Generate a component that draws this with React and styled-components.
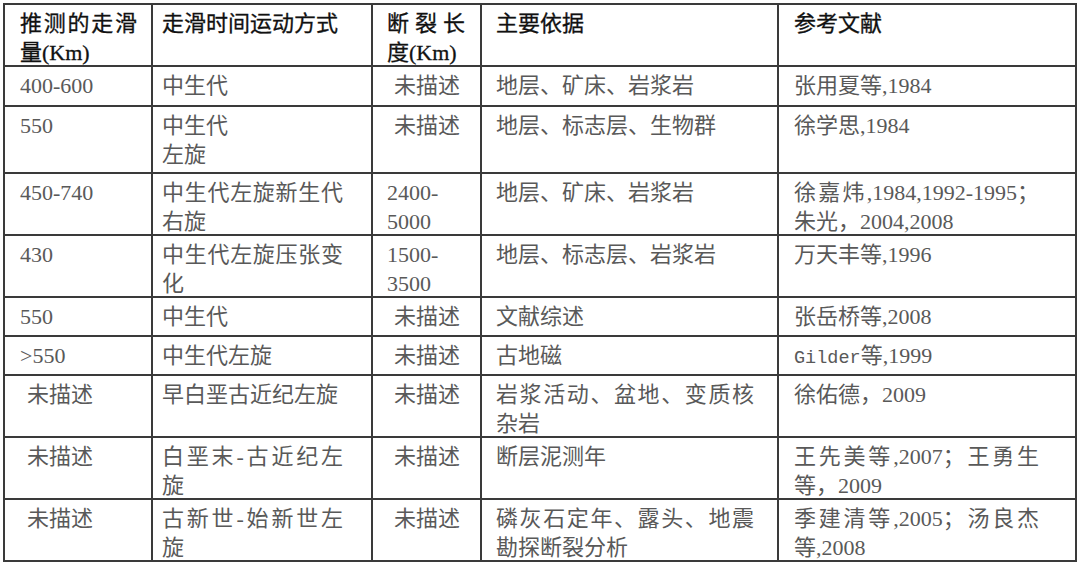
import React from "react";
import styled, { createGlobalStyle } from "styled-components";

const GlobalStyle = createGlobalStyle`
  html, body {
    margin: 0;
    padding: 0;
    background: #ffffff;
  }
  body {
    width: 1080px;
    height: 566px;
    overflow: hidden;
  }
`;

const COLS = [
  { w: 148, pl: 15, pr: 14 },
  { w: 220, pl: 9, pr: 28 },
  { w: 109, pl: 14, pr: 15 },
  { w: 297, pl: 14, pr: 23 },
  { w: 298, pl: 15, pr: 36 },
];

const Page = styled.div`
  padding: 3px 0 0 3px;
`;

const Table = styled.table`
  border-collapse: collapse;
  table-layout: fixed;
  width: 1074px;
  font-family: "Noto Sans CJK SC", sans-serif;
  font-size: 22px;
  line-height: 29px;
  color: #595959;
`;

const Col = styled.col`
  width: ${(p) => p.$w}px;
`;

const Row = styled.tr`
  height: ${(p) => p.$h}px;
`;

const Cell = styled.td`
  border: 2px solid #3a3a3a;
  vertical-align: top;
  padding: 2px ${(p) => COLS[p.$col].pr}px 0 ${(p) => COLS[p.$col].pl}px;
  text-align: justify;
  text-indent: ${(p) => p.$indent || 0}px;
  white-space: pre-line;
`;

const HeadCell = styled(Cell).attrs({ as: "th" })`
  font-weight: normal;
  color: #111111;
  -webkit-text-stroke: 0.3px #111111;
`;

const Txt = styled.span`
  font-family: "Liberation Serif", "Noto Sans CJK SC", serif;
  line-height: 1;
`;

const Mono = styled.span`
  font-family: "Liberation Mono", monospace;
  font-size: 18.5px;
  line-height: 1;
`;

const header = [
  "推测的走滑量(Km)",
  "走滑时间运动方式",
  "断裂长度(Km)",
  "主要依据",
  "参考文献",
];

const I = (t) => ({ t, indent: 7 });

const rows = [
  { h: 40, cells: ["400-600", "中生代", I("未描述"), "地层、矿床、岩浆岩", "张用夏等,1984"] },
  { h: 67, cells: ["550", "中生代\n左旋", I("未描述"), "地层、标志层、生物群", "徐学思,1984"] },
  {
    h: 61,
    cells: [
      "450-740",
      "中生代左旋新生代右旋",
      "2400-\n5000",
      "地层、矿床、岩浆岩",
      "徐嘉炜,1984,1992-1995；朱光，2004,2008",
    ],
  },
  { h: 62, cells: ["430", "中生代左旋压张变化", "1500-\n3500", "地层、标志层、岩浆岩", "万天丰等,1996"] },
  { h: 39, cells: ["550", "中生代", I("未描述"), "文献综述", "张岳桥等,2008"] },
  { h: 39, cells: [">550", "中生代左旋", I("未描述"), "古地磁", { mono: "Gilder", t: "等,1999" }] },
  {
    h: 62,
    cells: [I("未描述"), "早白垩古近纪左旋", I("未描述"), "岩浆活动、盆地、变质核杂岩", "徐佑德，2009"],
  },
  {
    h: 61,
    cells: [I("未描述"), "白垩末-古近纪左旋", I("未描述"), "断层泥测年", "王先美等,2007；王勇生等，2009"],
  },
  {
    h: 62,
    cells: [
      I("未描述"),
      "古新世-始新世左旋",
      I("未描述"),
      "磷灰石定年、露头、地震勘探断裂分析",
      "季建清等,2005；汤良杰等,2008",
    ],
  },
];

function renderCell(c, i) {
  if (typeof c === "string") {
    return (
      <Cell key={i} $col={i}>
        <Txt>{c}</Txt>
      </Cell>
    );
  }
  return (
    <Cell key={i} $col={i} $indent={c.indent}>
      {c.mono ? <Mono>{c.mono}</Mono> : null}
      <Txt>{c.t}</Txt>
    </Cell>
  );
}

export default function App() {
  return (
    <>
      <GlobalStyle />
      <Page>
        <Table>
          <colgroup>
            {COLS.map((c, i) => (
              <Col key={i} $w={c.w} />
            ))}
          </colgroup>
          <thead>
            <Row $h={62}>
              {header.map((h, i) => (
                <HeadCell key={i} $col={i}>
                  <Txt>{h}</Txt>
                </HeadCell>
              ))}
            </Row>
          </thead>
          <tbody>
            {rows.map((r, ri) => (
              <Row key={ri} $h={r.h}>
                {r.cells.map((c, i) => renderCell(c, i))}
              </Row>
            ))}
          </tbody>
        </Table>
      </Page>
    </>
  );
}
